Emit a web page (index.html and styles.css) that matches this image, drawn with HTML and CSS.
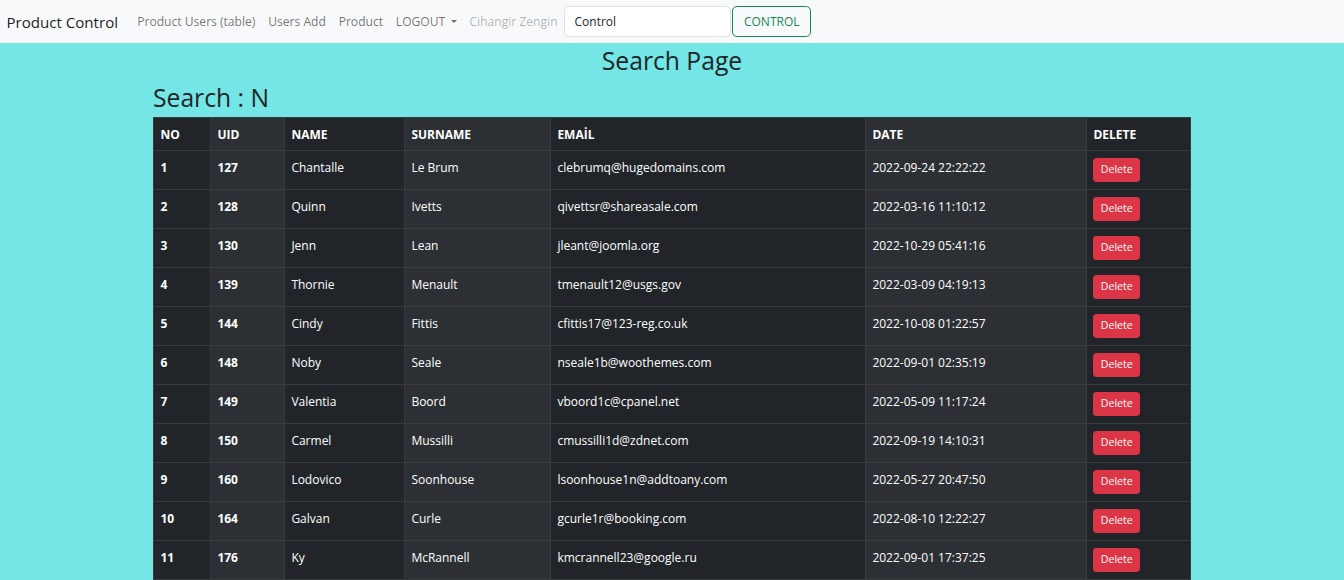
FILE: index.html
```html
<!DOCTYPE html>
<html lang="tr">
<head>
<meta charset="utf-8">
<title>Search Page</title>
<link rel="stylesheet" href="styles.css">
</head>
<body>
<nav class="navbar">
  <a class="brand" href="#">Product Control</a>
  <ul class="nav">
    <li><a class="nav-link" href="#">Product Users (table)</a></li>
    <li><a class="nav-link" href="#">Users Add</a></li>
    <li><a class="nav-link" href="#">Product</a></li>
    <li><a class="nav-link dropdown-toggle" href="#">LOGOUT</a></li>
    <li><a class="nav-link disabled" href="#">Cihangir Zengin</a></li>
  </ul>
  <form class="search">
    <input class="search-input" type="search" value="Control">
    <button class="btn-outline" type="button">CONTROL</button>
  </form>
</nav>

<main class="container">
  <h2 class="page-title">Search Page</h2>
  <h2 class="search-title">Search : N</h2>
  <table class="data-table">
    <colgroup>
      <col class="c-no"><col class="c-uid"><col class="c-name"><col class="c-surname"><col class="c-email"><col class="c-date"><col class="c-delete">
    </colgroup>
    <thead>
      <tr><th>NO</th><th>UID</th><th>NAME</th><th>SURNAME</th><th>EMAİL</th><th>DATE</th><th>DELETE</th></tr>
    </thead>
    <tbody>
      <tr><th>1</th><th>127</th><td>Chantalle</td><td>Le Brum</td><td>clebrumq@hugedomains.com</td><td>2022-09-24 22:22:22</td><td><button class="btn-delete" type="button">Delete</button></td></tr>
      <tr><th>2</th><th>128</th><td>Quinn</td><td>Ivetts</td><td>qivettsr@shareasale.com</td><td>2022-03-16 11:10:12</td><td><button class="btn-delete" type="button">Delete</button></td></tr>
      <tr><th>3</th><th>130</th><td>Jenn</td><td>Lean</td><td>jleant@joomla.org</td><td>2022-10-29 05:41:16</td><td><button class="btn-delete" type="button">Delete</button></td></tr>
      <tr><th>4</th><th>139</th><td>Thornie</td><td>Menault</td><td>tmenault12@usgs.gov</td><td>2022-03-09 04:19:13</td><td><button class="btn-delete" type="button">Delete</button></td></tr>
      <tr><th>5</th><th>144</th><td>Cindy</td><td>Fittis</td><td>cfittis17@123-reg.co.uk</td><td>2022-10-08 01:22:57</td><td><button class="btn-delete" type="button">Delete</button></td></tr>
      <tr><th>6</th><th>148</th><td>Noby</td><td>Seale</td><td>nseale1b@woothemes.com</td><td>2022-09-01 02:35:19</td><td><button class="btn-delete" type="button">Delete</button></td></tr>
      <tr><th>7</th><th>149</th><td>Valentia</td><td>Boord</td><td>vboord1c@cpanel.net</td><td>2022-05-09 11:17:24</td><td><button class="btn-delete" type="button">Delete</button></td></tr>
      <tr><th>8</th><th>150</th><td>Carmel</td><td>Mussilli</td><td>cmussilli1d@zdnet.com</td><td>2022-09-19 14:10:31</td><td><button class="btn-delete" type="button">Delete</button></td></tr>
      <tr><th>9</th><th>160</th><td>Lodovico</td><td>Soonhouse</td><td>lsoonhouse1n@addtoany.com</td><td>2022-05-27 20:47:50</td><td><button class="btn-delete" type="button">Delete</button></td></tr>
      <tr><th>10</th><th>164</th><td>Galvan</td><td>Curle</td><td>gcurle1r@booking.com</td><td>2022-08-10 12:22:27</td><td><button class="btn-delete" type="button">Delete</button></td></tr>
      <tr><th>11</th><th>176</th><td>Ky</td><td>McRannell</td><td>kmcrannell23@google.ru</td><td>2022-09-01 17:37:25</td><td><button class="btn-delete" type="button">Delete</button></td></tr>
      <tr><th></th><th></th><td></td><td></td><td></td><td></td><td></td></tr>
    </tbody>
  </table>
</main>
</body>
</html>
```

FILE: styles.css
```css
* { box-sizing: border-box; }

html, body {
  margin: 0;
  padding: 0;
}

body {
  background: #75e6e6;
  color: #212529;
  font-family: "Open Sans", "Noto Sans", "Liberation Sans", sans-serif;
  font-size: 12px;
  line-height: 1.5;
}

/* ---------- navbar ---------- */
.navbar {
  display: flex;
  align-items: center;
  background: #f8f9fa;
  padding: 6.4px 6.4px;
  height: 43px;
}

.brand {
  font-size: 15.1px;
  line-height: 24px;
  color: rgba(0, 0, 0, 0.9);
  text-decoration: none;
  margin-right: 12.8px;
  padding: 4px 0;
}

.nav {
  display: flex;
  list-style: none;
  margin: 0;
  padding: 0;
}

.nav-link {
  display: block;
  padding: 6.4px 6.4px;
  color: rgba(0, 0, 0, 0.55);
  text-decoration: none;
  font-size: 12.1px;
  line-height: 19.2px;
}

.nav-link.disabled {
  color: rgba(0, 0, 0, 0.3);
}

.dropdown-toggle::after {
  content: "";
  display: inline-block;
  margin-left: 0.45em;
  vertical-align: 0.255em;
  border-top: 0.3em solid;
  border-right: 0.3em solid transparent;
  border-left: 0.3em solid transparent;
}

.search {
  display: flex;
  gap: 1.3px;
  margin: 0;
}

.search-input {
  width: 167px;
  height: 30.4px;
  padding: 4.8px 9.6px;
  font-family: inherit;
  font-size: 12px;
  color: #212529;
  background: #fff;
  border: 1px solid #dee2e6;
  border-radius: 4.8px;
  outline: none;
}

.search-input::-webkit-search-cancel-button { display: none; }

.btn-outline {
  width: 79px;
  height: 30.4px;
  padding: 4.8px 9.6px;
  font-family: inherit;
  font-size: 12px;
  color: #198754;
  background: transparent;
  border: 1px solid #198754;
  border-radius: 4.8px;
}

/* ---------- content ---------- */
.container {
  width: 1038px;
  margin: 0 auto;
}

.page-title,
.search-title {
  font-size: 24.7px;
  font-weight: 500;
  line-height: 30.7px;
  margin: 0 0 6.4px;
}

.page-title {
  text-align: center;
  padding-top: 3px;
}

.search-title {
  margin-bottom: 3.4px;
}

.data-table {
  width: 1037px;
  table-layout: fixed;
  border-collapse: collapse;
  background: #212529;
  color: #fff;
}

.c-no { width: 57px; }
.c-uid { width: 74px; }
.c-name { width: 120px; }
.c-surname { width: 146px; }
.c-email { width: 315px; }
.c-date { width: 221px; }
.c-delete { width: 104px; }

.data-table th,
.data-table td {
  border: 1px solid #373b3e;
  padding: 6.4px 6.4px;
  text-align: left;
  vertical-align: top;
  white-space: nowrap;
  overflow: hidden;
  line-height: 19.2px;
}

.data-table tbody tr {
  height: 39px;
}

.data-table th {
  font-weight: 700;
}

.data-table tr > :nth-child(even) {
  background: #2c3034;
}

.btn-delete {
  display: block;
  height: 24.8px;
  padding: 3.2px 6.4px;
  font-family: inherit;
  font-size: 10.6px;
  line-height: 1.5;
  color: #fff;
  background: #dc3545;
  border: 1px solid #dc3545;
  border-radius: 3.2px;
}
```
